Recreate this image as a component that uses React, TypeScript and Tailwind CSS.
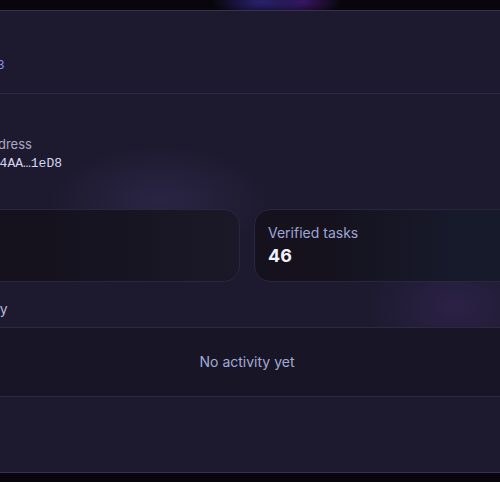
export default function App() {
  return (
    <div className="relative h-[482px] w-[500px] overflow-hidden bg-[#08060c] font-['Inter','Noto_Sans',sans-serif]">
      <div className="h-[10px] bg-[radial-gradient(ellipse_50px_16px_at_262px_2px,#2b2272,transparent),radial-gradient(ellipse_40px_14px_at_302px_2px,#3a1662,transparent)]" />
      <div className="border-y border-[#37324d] bg-[#1d1a2f] bg-[radial-gradient(ellipse_110px_55px_at_160px_190px,rgba(62,52,100,0.4),transparent),radial-gradient(ellipse_90px_60px_at_455px_295px,rgba(70,48,115,0.35),transparent)]">
        <div className="-ml-[260px] w-[1014px]">
          <div className="flex h-[83px] items-end border-b border-[#2d2942] pb-[19px] pl-[250px]">
            <span className="font-['Liberation_Mono',monospace] text-[12px] leading-4 text-[#8a94f2]">#3</span>
          </div>
          <div className="pt-[40px]">
            <div className="pl-[241px] text-[13px] leading-5 text-[#aca8c4]">Address</div>
            <div className="mt-[2px] pl-[244px] font-['Liberation_Mono',monospace] text-[13px] leading-4 text-[#d6d6f0]">
              0x4AA…1eD8
            </div>
            <div className="mt-[37px] grid grid-cols-2 gap-[14px]">
              <div className="h-[73px] rounded-2xl border border-[#2a2640] bg-[#16131f] bg-[linear-gradient(90deg,#15121e_60%,#1b1828)] p-[13px]">
                <div className="text-[14px] leading-5 text-[#9ea6d6]">Total tasks</div>
                <div className="mt-[1px] text-[18px] font-bold leading-6 text-[#f2f2ff]">46</div>
              </div>
              <div className="h-[73px] rounded-2xl border border-[#2a2640] bg-[#15121e] bg-[linear-gradient(90deg,#15121e_15%,#171a2b_40%)] p-[13px]">
                <div className="text-[14px] leading-5 text-[#9ea6d6]">Verified tasks</div>
                <div className="mt-[1px] text-[18px] font-bold leading-6 text-[#f2f2ff]">46</div>
              </div>
            </div>
          </div>
          <div className="border-b border-[#2d2942] pb-[8px] pl-[218px] pt-[17px]">
            <div className="text-[14px] leading-5 text-[#bab6d6]">Activity</div>
          </div>
          <div className="flex h-[69px] items-center justify-center border-b border-[#2d2942] bg-[#181526]">
            <span className="text-[14px] leading-5 text-[#a3abd6]">No activity yet</span>
          </div>
          <div className="h-[75px]" />
        </div>
      </div>
    </div>
  );
}
